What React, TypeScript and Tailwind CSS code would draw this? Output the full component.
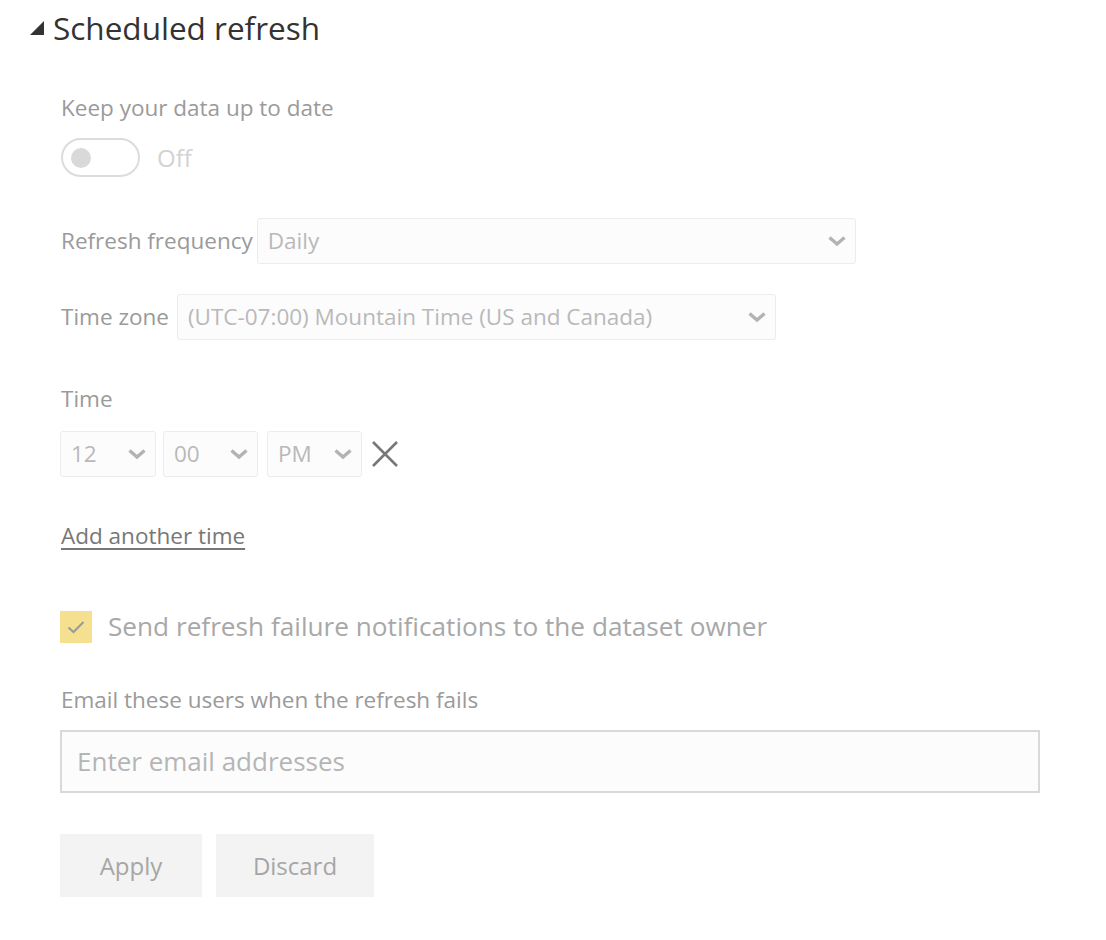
const font = { fontFamily: '"Open Sans", "Noto Sans", sans-serif' };

function Chevron() {
  return (
    <svg width="20" height="12" viewBox="0 0 20 12" className="shrink-0">
      <path d="M2.5 2.5 L10 9 L17.5 2.5" fill="none" stroke="#b3b3b3" strokeWidth="3.4" />
    </svg>
  );
}

function Select({ value, className }: { value: string; className: string }) {
  return (
    <div
      className={
        "flex items-center justify-between border border-[#ececec] rounded-[3px] bg-[#fcfcfc] h-[46px] pl-[10px] pr-[8px] " +
        className
      }
    >
      <span className="text-[22.5px] text-[#b9b9b9] leading-[30px]">{value}</span>
      <Chevron />
    </div>
  );
}

export default function App() {
  return (
    <div className="w-[1106px] h-[940px] bg-white" style={font}>
      <div className="flex items-center gap-[8px] pl-[29px] pt-[8px]">
        <svg width="16" height="16" viewBox="0 0 16 16">
          <path d="M15 1 L15 15 L1 15 Z" fill="#333" />
        </svg>
        <h1 className="text-[31.5px] text-[#333] leading-[40px]">Scheduled refresh</h1>
      </div>

      <div className="pl-[60px]">
        <p className="mt-[46px] pl-[1px] text-[22.5px] text-[#9a9a9a] leading-[28px]">Keep your data up to date</p>

        <div className="mt-[16px] pl-[1px] flex items-center gap-[17px]">
          <div className="w-[79px] h-[39px] rounded-full border-2 border-[#dcdcdc] flex items-center pl-[8px]">
            <div className="w-[20px] h-[20px] rounded-full bg-[#d9d9d9]" />
          </div>
          <span className="text-[24px] text-[#d2d2d2]">Off</span>
        </div>

        <div className="mt-[41px] pl-[1px] flex items-center gap-[4px]">
          <span className="text-[22.5px] text-[#9a9a9a]">Refresh frequency</span>
          <Select value="Daily" className="w-[599px]" />
        </div>

        <div className="mt-[30px] pl-[1px] flex items-center gap-[8px]">
          <span className="text-[22.5px] text-[#9a9a9a]">Time zone</span>
          <Select value="(UTC-07:00) Mountain Time (US and Canada)" className="w-[599px]" />
        </div>

        <p className="mt-[45px] pl-[1px] text-[22.5px] text-[#9a9a9a] leading-[28px]">Time</p>

        <div className="mt-[18px] flex items-center">
          <Select value="12" className="w-[96px]" />
          <Select value="00" className="w-[95px] ml-[7px]" />
          <Select value="PM" className="w-[95px] ml-[9px]" />
          <svg width="28" height="28" viewBox="0 0 28 28" className="ml-[9px]">
            <path d="M2 2 L26 26 M26 2 L2 26" stroke="#777" strokeWidth="2.6" />
          </svg>
        </div>

        <p className="mt-[45px] pl-[1px] text-[22.5px] text-[#777] underline underline-offset-[4px] leading-[28px]">
          Add another time
        </p>

        <div className="mt-[57px] flex items-center gap-[16px]">
          <div className="w-[32px] h-[32px] bg-[#f5e08f] flex items-center justify-center">
            <svg width="18" height="14" viewBox="0 0 18 14">
              <path d="M1.5 7.5 L6.5 12 L16.5 2" fill="none" stroke="#999" strokeWidth="2" />
            </svg>
          </div>
          <span className="text-[26.2px] text-[#a8a8a8]">Send refresh failure notifications to the dataset owner</span>
        </div>

        <p className="mt-[40px] pl-[1px] text-[22.5px] text-[#9a9a9a] leading-[28px]">
          Email these users when the refresh fails
        </p>

        <div className="mt-[16px] w-[980px] h-[63px] border-2 border-[#d9d9d9] bg-[#fcfcfc] flex items-center pl-[15px]">
          <span className="text-[26px] text-[#b5b5b5]">Enter email addresses</span>
        </div>

        <div className="mt-[41px] flex gap-[14px]">
          <button className="w-[142px] h-[63px] bg-[#f3f3f3] text-[24px] text-[#a6a6a6]">Apply</button>
          <button className="w-[158px] h-[63px] bg-[#f3f3f3] text-[24px] text-[#a6a6a6]">Discard</button>
        </div>
      </div>
    </div>
  );
}
